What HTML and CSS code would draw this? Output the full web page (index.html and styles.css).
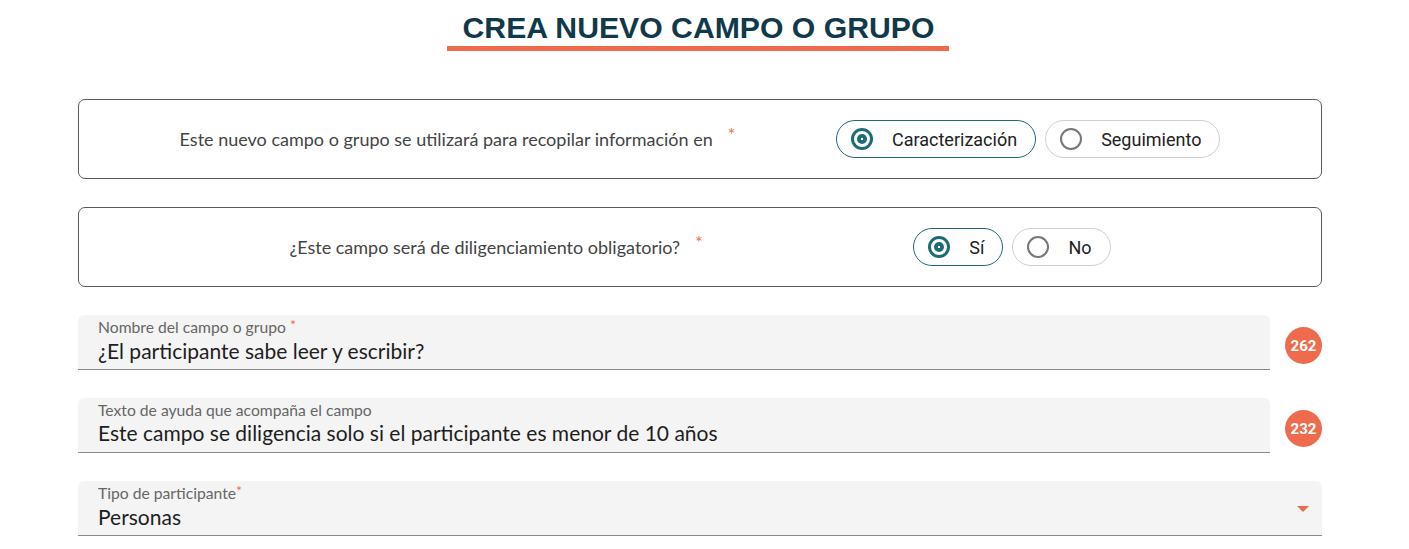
FILE: index.html
```html
<!DOCTYPE html>
<html lang="es">
<head>
<meta charset="utf-8">
<title>Crea nuevo campo o grupo</title>
<link rel="stylesheet" href="styles.css">
</head>
<body>
<div class="page">
  <header class="title-wrap">
    <h1 class="title">CREA NUEVO CAMPO O GRUPO</h1>
  </header>

  <section class="card card-first">
    <div class="question">Este nuevo campo o grupo se utilizará para recopilar información en<span class="req">*</span></div>
    <div class="options">
      <label class="pill selected"><span class="radio"></span><span class="pill-text">Caracterización</span></label>
      <label class="pill"><span class="radio"></span><span class="pill-text">Seguimiento</span></label>
    </div>
  </section>

  <section class="card">
    <div class="question">¿Este campo será de diligenciamiento obligatorio?<span class="req">*</span></div>
    <div class="options">
      <label class="pill selected"><span class="radio"></span><span class="pill-text">Sí</span></label>
      <label class="pill"><span class="radio"></span><span class="pill-text">No</span></label>
    </div>
  </section>

  <div class="field-row">
    <div class="field">
      <div class="field-label">Nombre del campo o grupo <span class="req-small">*</span></div>
      <div class="field-value">¿El participante sabe leer y escribir?</div>
    </div>
    <span class="badge">262</span>
  </div>

  <div class="field-row">
    <div class="field">
      <div class="field-label">Texto de ayuda que acompaña el campo</div>
      <div class="field-value">Este campo se diligencia solo si el participante es menor de 10 años</div>
    </div>
    <span class="badge">232</span>
  </div>

  <div class="field-row">
    <div class="field field-select">
      <div class="field-label">Tipo de participante<span class="req-small">*</span></div>
      <div class="field-value">Personas</div>
      <span class="caret"></span>
    </div>
  </div>
</div>
</body>
</html>
```

FILE: styles.css
```css
* { box-sizing: border-box; }

html, body {
  margin: 0;
  padding: 0;
  background: #ffffff;
}

body {
  font-family: "Lato", "Noto Sans", sans-serif;
  color: #333;
}

.page {
  padding: 0 87px 0 78px;
}

.title-wrap {
  display: flex;
  justify-content: center;
  padding-top: 10px;
  padding-right: 4px;
}

.title {
  margin: 0;
  font-family: "Liberation Sans", Arial, sans-serif;
  font-weight: 700;
  font-size: 30.2px;
  line-height: 35px;
  color: #10394a;
  padding: 0 15px 1px 16px;
  border-bottom: 5px solid #ee6c4d;
}

.card {
  display: flex;
  align-items: center;
  justify-content: space-evenly;
  height: 80px;
  border: 1px solid #5a5a5a;
  border-radius: 7px;
  margin-top: 28px;
}

.card-first {
  margin-top: 48px;
}

.question {
  font-size: 18px;
  color: #444;
  white-space: nowrap;
}

.req {
  color: #ee6c4d;
  font-size: 18px;
  margin-left: 15px;
  position: relative;
  top: -5px;
}

.options {
  display: flex;
  gap: 9px;
}

.pill {
  display: flex;
  align-items: center;
  height: 38px;
  padding: 0 18px 0 14px;
  border: 1px solid #cfcfcf;
  border-radius: 19px;
  font-family: "Roboto", "Noto Sans", sans-serif;
  font-size: 18px;
  color: #222;
}

.pill.selected {
  border-color: #1d6b78;
}

.radio {
  width: 22px;
  height: 22px;
  border-radius: 50%;
  border: 2px solid #777;
  margin-right: 19px;
  display: flex;
  align-items: center;
  justify-content: center;
  flex: none;
}

.pill.selected .radio {
  border: 3px solid #1d6b78;
}

.pill.selected .radio::after {
  content: "";
  width: 10px;
  height: 10px;
  border-radius: 50%;
  background: radial-gradient(circle, rgba(255,255,255,0.85) 0 1px, #1d6b78 1.6px);
}

.field-row {
  display: flex;
  align-items: center;
  margin-top: 28px;
}

.field {
  position: relative;
  flex: 1;
  height: 55px;
  background: #f4f4f4;
  border-radius: 6px 6px 0 0;
  border-bottom: 1px solid #8a8a8a;
  padding: 3px 20px 0;
}

.field-label {
  font-size: 15.7px;
  line-height: 18px;
  color: #666;
}

.req-small {
  color: #ee6c4d;
  font-size: 14px;
  position: relative;
  top: -3px;
}

.field-value {
  font-size: 21px;
  line-height: 26px;
  color: #1e1e1e;
  margin-top: 1px;
}

.badge {
  flex: none;
  width: 37px;
  height: 37px;
  border-radius: 50%;
  background: #ee6c4d;
  color: #fff;
  font-family: "Roboto", "Noto Sans", sans-serif;
  font-weight: 700;
  font-size: 15px;
  display: flex;
  align-items: center;
  justify-content: center;
  margin-left: 15px;
  margin-top: 6px;
}

.caret {
  position: absolute;
  right: 13px;
  top: 25px;
  width: 0;
  height: 0;
  border-left: 6px solid transparent;
  border-right: 6px solid transparent;
  border-top: 6px solid #ee6c4d;
}
```
